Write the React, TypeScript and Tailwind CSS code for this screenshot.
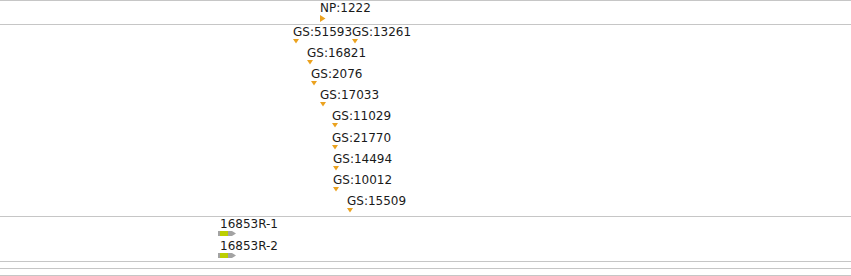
import React from "react";

const ORANGE = "#eba21f";

type Feat = { label: string; x: number; row: number };

const gsFeatures: Feat[] = [
  { label: "GS:51593", x: 293, row: 0 },
  { label: "GS:13261", x: 352, row: 0 },
  { label: "GS:16821", x: 307, row: 1 },
  { label: "GS:2076", x: 311, row: 2 },
  { label: "GS:17033", x: 320, row: 3 },
  { label: "GS:11029", x: 332, row: 4 },
  { label: "GS:21770", x: 332, row: 5 },
  { label: "GS:14494", x: 333, row: 6 },
  { label: "GS:10012", x: 333, row: 7 },
  { label: "GS:15509", x: 347, row: 8 },
];

const font = "font-['DejaVu_Sans',sans-serif] text-[12px] leading-[14px] text-[#1a1a1a] whitespace-nowrap";

function Line() {
  return <div className="h-px w-full bg-[#c6c6c6] shrink-0" />;
}

function DownTri({ x, y }: { x: number; y: number }) {
  return (
    <svg className="absolute" style={{ left: x, top: y }} width="6" height="5" viewBox="0 0 6 5">
      <polygon points="0,0 6,0 3,4.5" fill={ORANGE} />
    </svg>
  );
}

function ReadBar({ y }: { y: number }) {
  return (
    <svg className="absolute" style={{ left: 218, top: y }} width="18" height="5" viewBox="0 0 18 5">
      <rect x="0" y="0" width="2" height="5" fill="#a3a3a3" />
      <rect x="2" y="0" width="8" height="5" fill="#bccf00" />
      <polygon points="10,0 14,0 18,2.5 14,5 10,5" fill="#a3a3a3" />
    </svg>
  );
}

export default function App() {
  return (
    <div className="w-[851px] h-[276px] bg-white flex flex-col overflow-hidden">
      <Line />
      <div className="relative h-[23px] shrink-0">
        <span className={`absolute ${font}`} style={{ left: 320, top: 0 }}>NP:1222</span>
        <svg className="absolute" style={{ left: 320, top: 14 }} width="6" height="7" viewBox="0 0 6 7">
          <polygon points="0,0 5.5,3.5 0,7" fill={ORANGE} />
        </svg>
      </div>
      <Line />
      <div className="relative h-[191px] shrink-0">
        {gsFeatures.map((f) => (
          <React.Fragment key={f.label}>
            <span className={`absolute ${font}`} style={{ left: f.x, top: f.row * 21.1 }}>{f.label}</span>
            <DownTri x={f.x} y={Math.round(f.row * 21.1) + 14} />
          </React.Fragment>
        ))}
      </div>
      <Line />
      <div className="relative h-[44px] shrink-0">
        <span className={`absolute ${font}`} style={{ left: 220, top: 0 }}>16853R-1</span>
        <ReadBar y={14} />
        <span className={`absolute ${font}`} style={{ left: 220, top: 22 }}>16853R-2</span>
        <ReadBar y={36} />
      </div>
      <Line />
      <div className="h-[6px] shrink-0" />
      <Line />
      <div className="h-[6px] shrink-0" />
      <Line />
    </div>
  );
}
